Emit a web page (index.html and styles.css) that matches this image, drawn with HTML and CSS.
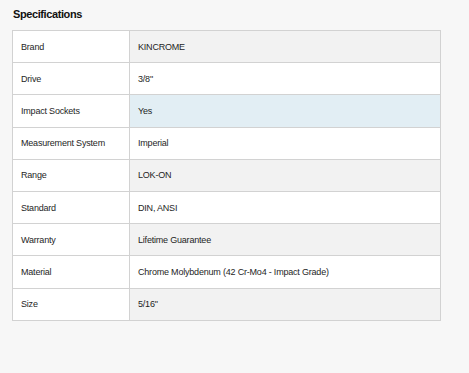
FILE: index.html
```html
<!DOCTYPE html>
<html lang="en">
<head>
    <meta charset="UTF-8">
    <meta name="viewport" content="width=device-width, initial-scale=1.0">
    <title>Specifications</title>
    <link rel="stylesheet" href="styles.css">
</head>
<body>
    <div class="specs">
        <h3 class="specs-title">Specifications</h3>
        <table class="specs-table">
            <tr><td>Brand</td><td>KINCROME</td></tr>
            <tr><td>Drive</td><td>3/8"</td></tr>
            <tr class="hover"><td>Impact Sockets</td><td>Yes</td></tr>
            <tr><td>Measurement System</td><td>Imperial</td></tr>
            <tr><td>Range</td><td>LOK-ON</td></tr>
            <tr><td>Standard</td><td>DIN, ANSI</td></tr>
            <tr><td>Warranty</td><td>Lifetime Guarantee</td></tr>
            <tr><td>Material</td><td>Chrome Molybdenum (42 Cr-Mo4 - Impact Grade)</td></tr>
            <tr><td>Size</td><td>5/16"</td></tr>
        </table>
    </div>
</body>
</html>
```
FILE: styles.css
```css
* {
    margin: 0;
    padding: 0;
    box-sizing: border-box;
    font-family: 'Liberation Sans', Arial, sans-serif;
}

body {
    background: #f7f7f7;
    color: #222;
}

.specs {
    padding: 7px 28px 0 12px;
}

.specs-title {
    font-size: 11px;
    font-weight: bold;
    letter-spacing: -0.4px;
    color: #111;
    padding: 1px 0 0 1px;
    height: 23px;
}

.specs-table {
    width: 429px;
    border-collapse: collapse;
    font-size: 9px;
    letter-spacing: -0.2px;
    color: #1e1e1e;
}

.specs-table td {
    border: 1px solid #d2d2d2;
    padding: 0 8px;
    height: 32.2px;
    background: #fff;
}

.specs-table td:first-child {
    width: 117px;
}

.specs-table tr:nth-child(odd) td:last-child {
    background: #f2f2f2;
}

.specs-table tr.hover td:last-child {
    background: #e2eef4;
}
```
